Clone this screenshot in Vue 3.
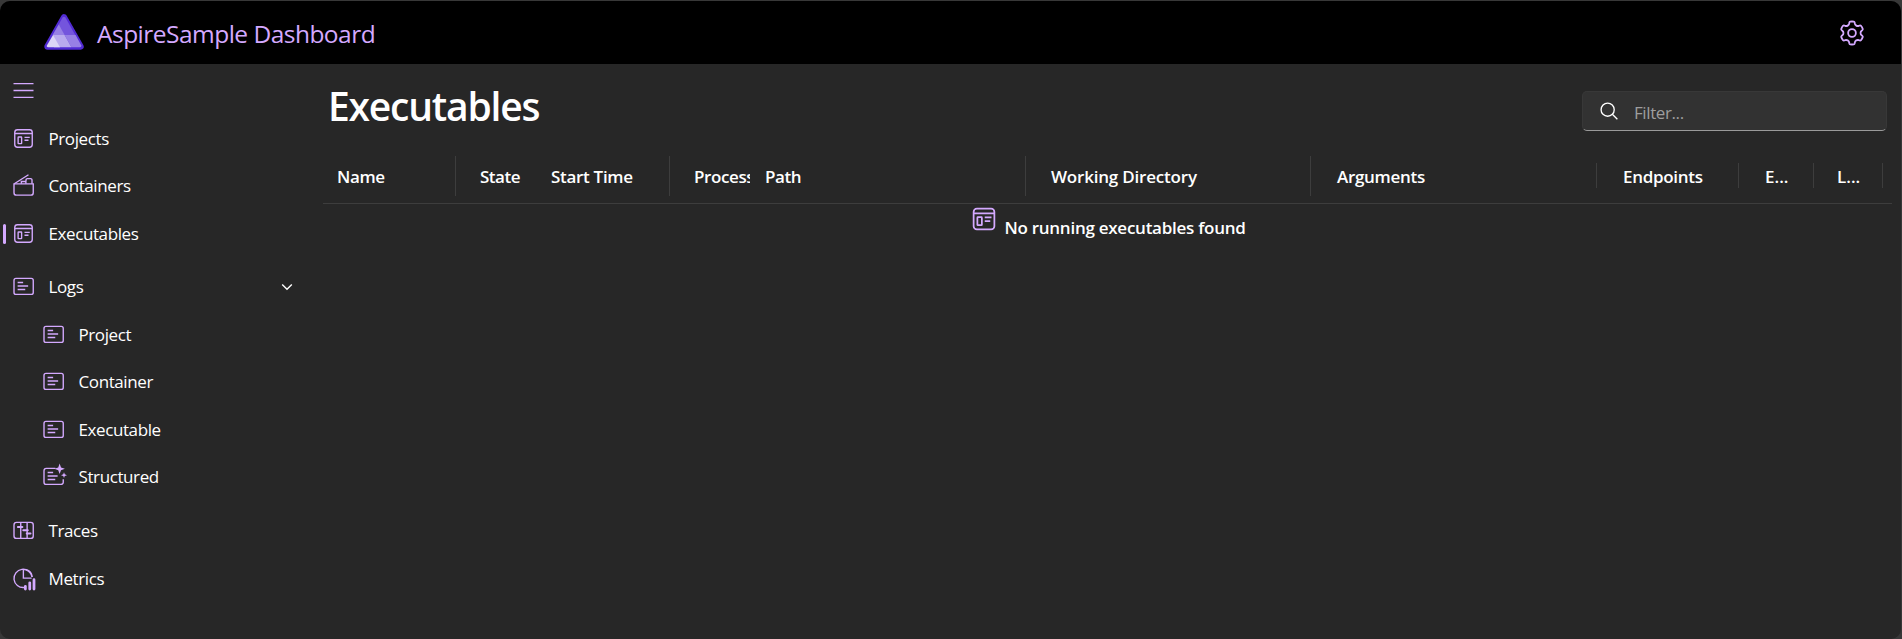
<script setup>
const topLinks = [
  { label: 'Projects', icon: 'app' },
  { label: 'Containers', icon: 'box' },
  { label: 'Executables', icon: 'app', active: true },
  { label: 'Logs', icon: 'log', gap: true, expandable: true },
  { label: 'Project', icon: 'log', child: true },
  { label: 'Container', icon: 'log', child: true },
  { label: 'Executable', icon: 'log', child: true },
  { label: 'Structured', icon: 'sparkle', child: true },
  { label: 'Traces', icon: 'trace', gap: true },
  { label: 'Metrics', icon: 'metrics' },
]
const columns = [
  { label: 'Name', cls: 'c-name tall' },
  { label: 'State', cls: 'c-state' },
  { label: 'Start Time', cls: 'c-start tall' },
  { label: 'Process', cls: 'c-process' },
  { label: 'Path', cls: 'c-path tall' },
  { label: 'Working Directory', cls: 'c-dir tall' },
  { label: 'Arguments', cls: 'c-args short' },
  { label: 'Endpoints', cls: 'c-end short' },
  { label: 'E...', cls: 'c-env short' },
  { label: 'L...', cls: 'c-logs short' },
]

// Six-toothed gear outline: one tooth profile rotated in 60 degree steps.
const turn = (x, y, deg) => {
  const a = (deg * Math.PI) / 180
  const px = 12 + x * Math.cos(a) - y * Math.sin(a)
  const py = 12 + x * Math.sin(a) + y * Math.cos(a)
  return `${px.toFixed(2)} ${py.toFixed(2)}`
}
const gearPath =
  [0, 60, 120, 180, 240, 300]
    .map((d, i) =>
      [
        `${i ? 'L' : 'M'}${turn(-2.15, -8.3, d)}`,
        `Q${turn(-2, -9, d)} ${turn(-1.4, -9.1, d)}`,
        `Q${turn(0, -9.3, d)} ${turn(1.4, -9.1, d)}`,
        `Q${turn(2, -9, d)} ${turn(2.15, -8.3, d)}`,
        `L${turn(2.25, -7.6, d)}`,
        `C${turn(2.5, -6.1, d)} ${turn(-2.5, -6.1, d + 60)} ${turn(-2.25, -7.6, d + 60)}`,
      ].join(''),
    )
    .join('') + 'Z'
</script>

<template>
  <div class="shell">
    <div class="window">
      <header class="topbar">
        <svg class="logo" viewBox="0 0 40 36">
          <path d="M20 3.2 36.6 32.6H3.4Z" fill="#512bd4" stroke="#512bd4" stroke-width="6.2" stroke-linejoin="round" />
          <path d="M18.6 3.6Q20 1.8 21.4 3.6L31.3 21H8.7Z" fill="#7455dd" />
          <path d="M14.8 10.6 20.6 21H8.7Z" fill="#9780e5" />
          <path d="M20.6 21H31.6L37.2 31.2Q37.8 33.2 36 33.2H27.4Z" fill="#9780e5" />
          <path d="M9 21H20.6L27.4 33.2H10Z" fill="#b9aaee" />
          <path d="M9 21 16 33.2H4Q2.2 33.2 2.9 31.4Z" fill="#dcd5f6" />
        </svg>
        <span class="brand">AspireSample Dashboard</span>
        <svg class="gear" viewBox="0 0 24 24">
          <path :d="gearPath" />
          <circle cx="12" cy="12" r="3.1" />
        </svg>
      </header>

      <div class="body">
        <nav class="sidebar">
          <svg class="burger" viewBox="0 0 20 20"><path d="M2 4.5h16M2 10h16M2 15.5h16" /></svg>
          <div
            v-for="link in topLinks"
            :key="link.label"
            class="link"
            :class="{ active: link.active, gap: link.gap, child: link.child }"
          >
            <svg class="icon" viewBox="0 0 20 20">
              <template v-if="link.icon === 'app'">
                <rect x="3" y="3" width="14" height="14" rx="2.2" />
                <path d="M3 6h14M10.8 9.1h4.2M10.8 11.4h3.2" />
                <rect x="5.7" y="8.8" width="2.8" height="5.3" rx=".3" />
              </template>
              <template v-else-if="link.icon === 'box'">
                <path d="M2.4 8.7h15.4v7a2 2 0 0 1-2 2H4.4a2 2 0 0 1-2-2Z" />
                <path d="M2.6 8.6 14 1.4M8.3 8.5V6.8h3.6v1.8M12 6.4V5.6a1.1 1.1 0 0 1 1.1-1.1h2.6a1.1 1.1 0 0 1 1.1 1.1v3" />
              </template>
              <template v-else-if="link.icon === 'log'">
                <rect x="2.4" y="3.5" width="15.4" height="12.8" rx="1.6" />
                <path d="M5.3 6.8h4.4M5.3 9.6h8.4M5.3 12.4h6.1" />
              </template>
              <template v-else-if="link.icon === 'sparkle'">
                <path d="M11.5 3.5H4.2A1.8 1.8 0 0 0 2.4 5.3v9.2a1.8 1.8 0 0 0 1.8 1.8H16a1.8 1.8 0 0 0 1.8-1.8v-2.4M5.3 6.8h4.4M5.3 9.6h8M5.3 12.4h6.1" />
                <path class="solid" d="M14.9-.4 16 2.7 19.1 3.8 16 4.9 14.9 8 13.8 4.9 10.7 3.8 13.8 2.7ZM18.4 6.6 19 8.2 20.8 8.9 19 9.6 18.4 11.2 17.8 9.6 16 8.9 17.8 8.2Z" />
              </template>
              <template v-else-if="link.icon === 'trace'">
                <rect x="2.4" y="3.5" width="15.4" height="12.8" rx="2" />
                <path d="M7.8 3.5v12.8M12.9 3.5v12.8" />
                <path class="thick" d="M5.5 7.1h3.6M9.8 9.7h3.6M12.6 12.4h3" />
              </template>
              <template v-else>
                <path d="M10.4 17.2A7.3 7.3 0 1 1 16.9 8.8" />
                <path d="M9.9 2.5V9.7h6.6" />
                <path d="M12 2.9a6.5 6.5 0 0 1 4.9 5.9" />
                <path class="bars" d="M11.5 16.2v2.2M15 13.4v5M18.4 10.9v7.5" />
              </template>
            </svg>
            <span class="text">{{ link.label }}</span>
            <svg v-if="link.expandable" class="chevron" viewBox="0 0 12 8"><path d="M1.2 1.4 6 6.2l4.8-4.8" /></svg>
          </div>
        </nav>

        <main class="content">
          <div class="heading">
            <h1>Executables</h1>
            <div class="filter">
              <svg class="search" viewBox="0 0 20 20"><circle cx="8.5" cy="8.5" r="7.3" /><path d="m13.7 13.7 5.6 5.4" /></svg>
              <span>Filter...</span>
            </div>
          </div>
          <div class="grid-head">
            <div v-for="col in columns" :key="col.label" class="cell" :class="col.cls">
              <span>{{ col.label }}</span>
            </div>
          </div>
          <div class="empty">
            <svg class="empty-icon" viewBox="0 0 24 24">
              <rect x="3.7" y="3.7" width="16.6" height="16.6" rx="2.6" />
              <path d="M3.7 7.4h16.6M12.6 10.7h5.4M12.6 13.6h4.4" />
              <rect x="6.7" y="10.5" width="3.6" height="6.4" rx=".4" />
            </svg>
            <span>No running executables found</span>
          </div>
        </main>
      </div>
    </div>
  </div>
</template>

<style>
html,
body {
  background: #383838;
  overflow: hidden;
}
</style>

<style scoped>
.shell {
  box-sizing: border-box;
  height: 639px;
  padding: 1px 1px 0 0;
  background: #383838;
  font-family: "Open Sans", "Noto Sans", sans-serif;
  font-size: 17px;
  color: #fff;
}
.window {
  height: 638px;
  border-radius: 10px;
  overflow: hidden;
  background: #272727;
}
svg {
  display: block;
  flex: none;
  fill: none;
  stroke: #d4a9ff;
  stroke-width: 1.1;
  overflow: visible;
}
.topbar {
  box-sizing: border-box;
  height: 63px;
  display: flex;
  align-items: center;
  padding: 0 34px 0 44px;
  background: #000;
}
.logo {
  width: 40px;
  height: 36px;
  margin-top: -2px;
  stroke: none;
}
.brand {
  margin-left: 13px;
  padding-top: 1px;
  font-size: 24.5px;
  letter-spacing: -0.52px;
  color: #d4a9ff;
}
.gear {
  width: 30px;
  height: 30px;
  margin-left: auto;
  stroke-width: 1.45;
}
.body {
  display: flex;
}
.sidebar {
  box-sizing: border-box;
  width: 313px;
  padding-top: 14px;
}
.burger {
  width: 25px;
  height: 25px;
  margin: 0 0 14.5px 11px;
}
.link {
  box-sizing: border-box;
  display: flex;
  align-items: center;
  height: 41.25px;
  margin-bottom: 6.25px;
  padding-left: 11px;
  border-radius: 4px;
  position: relative;
}
.link.gap {
  margin-top: 12.5px;
}
.link.child {
  padding-left: 41px;
}
.link.active::before {
  content: "";
  position: absolute;
  left: 3px;
  top: 11px;
  width: 3px;
  height: 20px;
  border-radius: 2px;
  background: #d4a9ff;
}
.icon {
  width: 25px;
  height: 25px;
}
.icon .solid {
  fill: #d4a9ff;
  stroke: none;
}
.icon .thick {
  stroke-width: 1.6;
  stroke-linecap: round;
}
.icon .bars {
  stroke-width: 2.2;
  stroke-linecap: round;
}
.text {
  margin-left: 12.5px;
  letter-spacing: -0.4px;
}
.chevron {
  width: 12px;
  height: 8px;
  margin-left: auto;
  margin-right: 20.5px;
  stroke: #fff;
  stroke-width: 1.4;
}
.content {
  width: 1569px;
  margin-left: 10px;
}
.heading {
  display: flex;
  justify-content: space-between;
  height: 87px;
}
h1 {
  margin: 14px 0 0 5px;
  font-size: 39px;
  line-height: 56px;
  font-weight: 600;
  letter-spacing: -1.2px;
}
.filter {
  box-sizing: border-box;
  display: flex;
  align-items: center;
  width: 305px;
  height: 40px;
  margin: 27px 5px 0 0;
  padding-left: 17px;
  border: 1px solid #383838;
  border-bottom-color: #9a9a9a;
  border-radius: 5px;
  background: #323232;
  color: #9e9e9e;
  letter-spacing: -0.4px;
}
.search {
  width: 18px;
  height: 18px;
  margin-right: 16px;
  stroke: #fff;
  stroke-width: 1.5;
}
.filter span {
  padding-top: 2px;
}
.grid-head {
  box-sizing: border-box;
  display: flex;
  height: 53px;
  padding-top: 5px;
  border-bottom: 1px solid #3d3d3d;
  font-weight: 600;
  letter-spacing: -0.4px;
}
.cell {
  box-sizing: border-box;
  flex: none;
  height: 40px;
  line-height: 41px;
  overflow: hidden;
  white-space: nowrap;
}
.tall {
  border-right: 1px solid #3d3d3d;
}
.short {
  height: 25px;
  line-height: 27px;
  margin-top: 7px;
  border-right: 1px solid #3d3d3d;
}
.c-name { width: 133px; padding-left: 14px; }
.c-state { width: 71px; padding-left: 24px; letter-spacing: -0.5px; }
.c-start { width: 143px; padding-left: 24px; letter-spacing: -0.3px; }
.c-process { width: 80px; padding-left: 24px; }
.c-process span { display: block; width: 56px; overflow: hidden; }
.c-path { width: 276px; padding-left: 15px; }
.c-dir { width: 285px; padding-left: 25px; letter-spacing: -0.2px; }
.c-args { width: 286px; padding-left: 26px; letter-spacing: -0.3px; }
.c-end { width: 142px; padding-left: 26px; letter-spacing: -0.3px; }
.c-env { width: 75px; padding-left: 26px; letter-spacing: 0; }
.c-logs { width: 69px; padding-left: 23px; letter-spacing: 0; }
.empty {
  display: flex;
  justify-content: center;
  font-weight: 600;
  letter-spacing: -0.26px;
}
.empty-icon {
  width: 30px;
  height: 30px;
  stroke-width: 1.4;
}
.empty span {
  margin-left: 5px;
  padding-top: 12px;
  line-height: 23px;
}
</style>
